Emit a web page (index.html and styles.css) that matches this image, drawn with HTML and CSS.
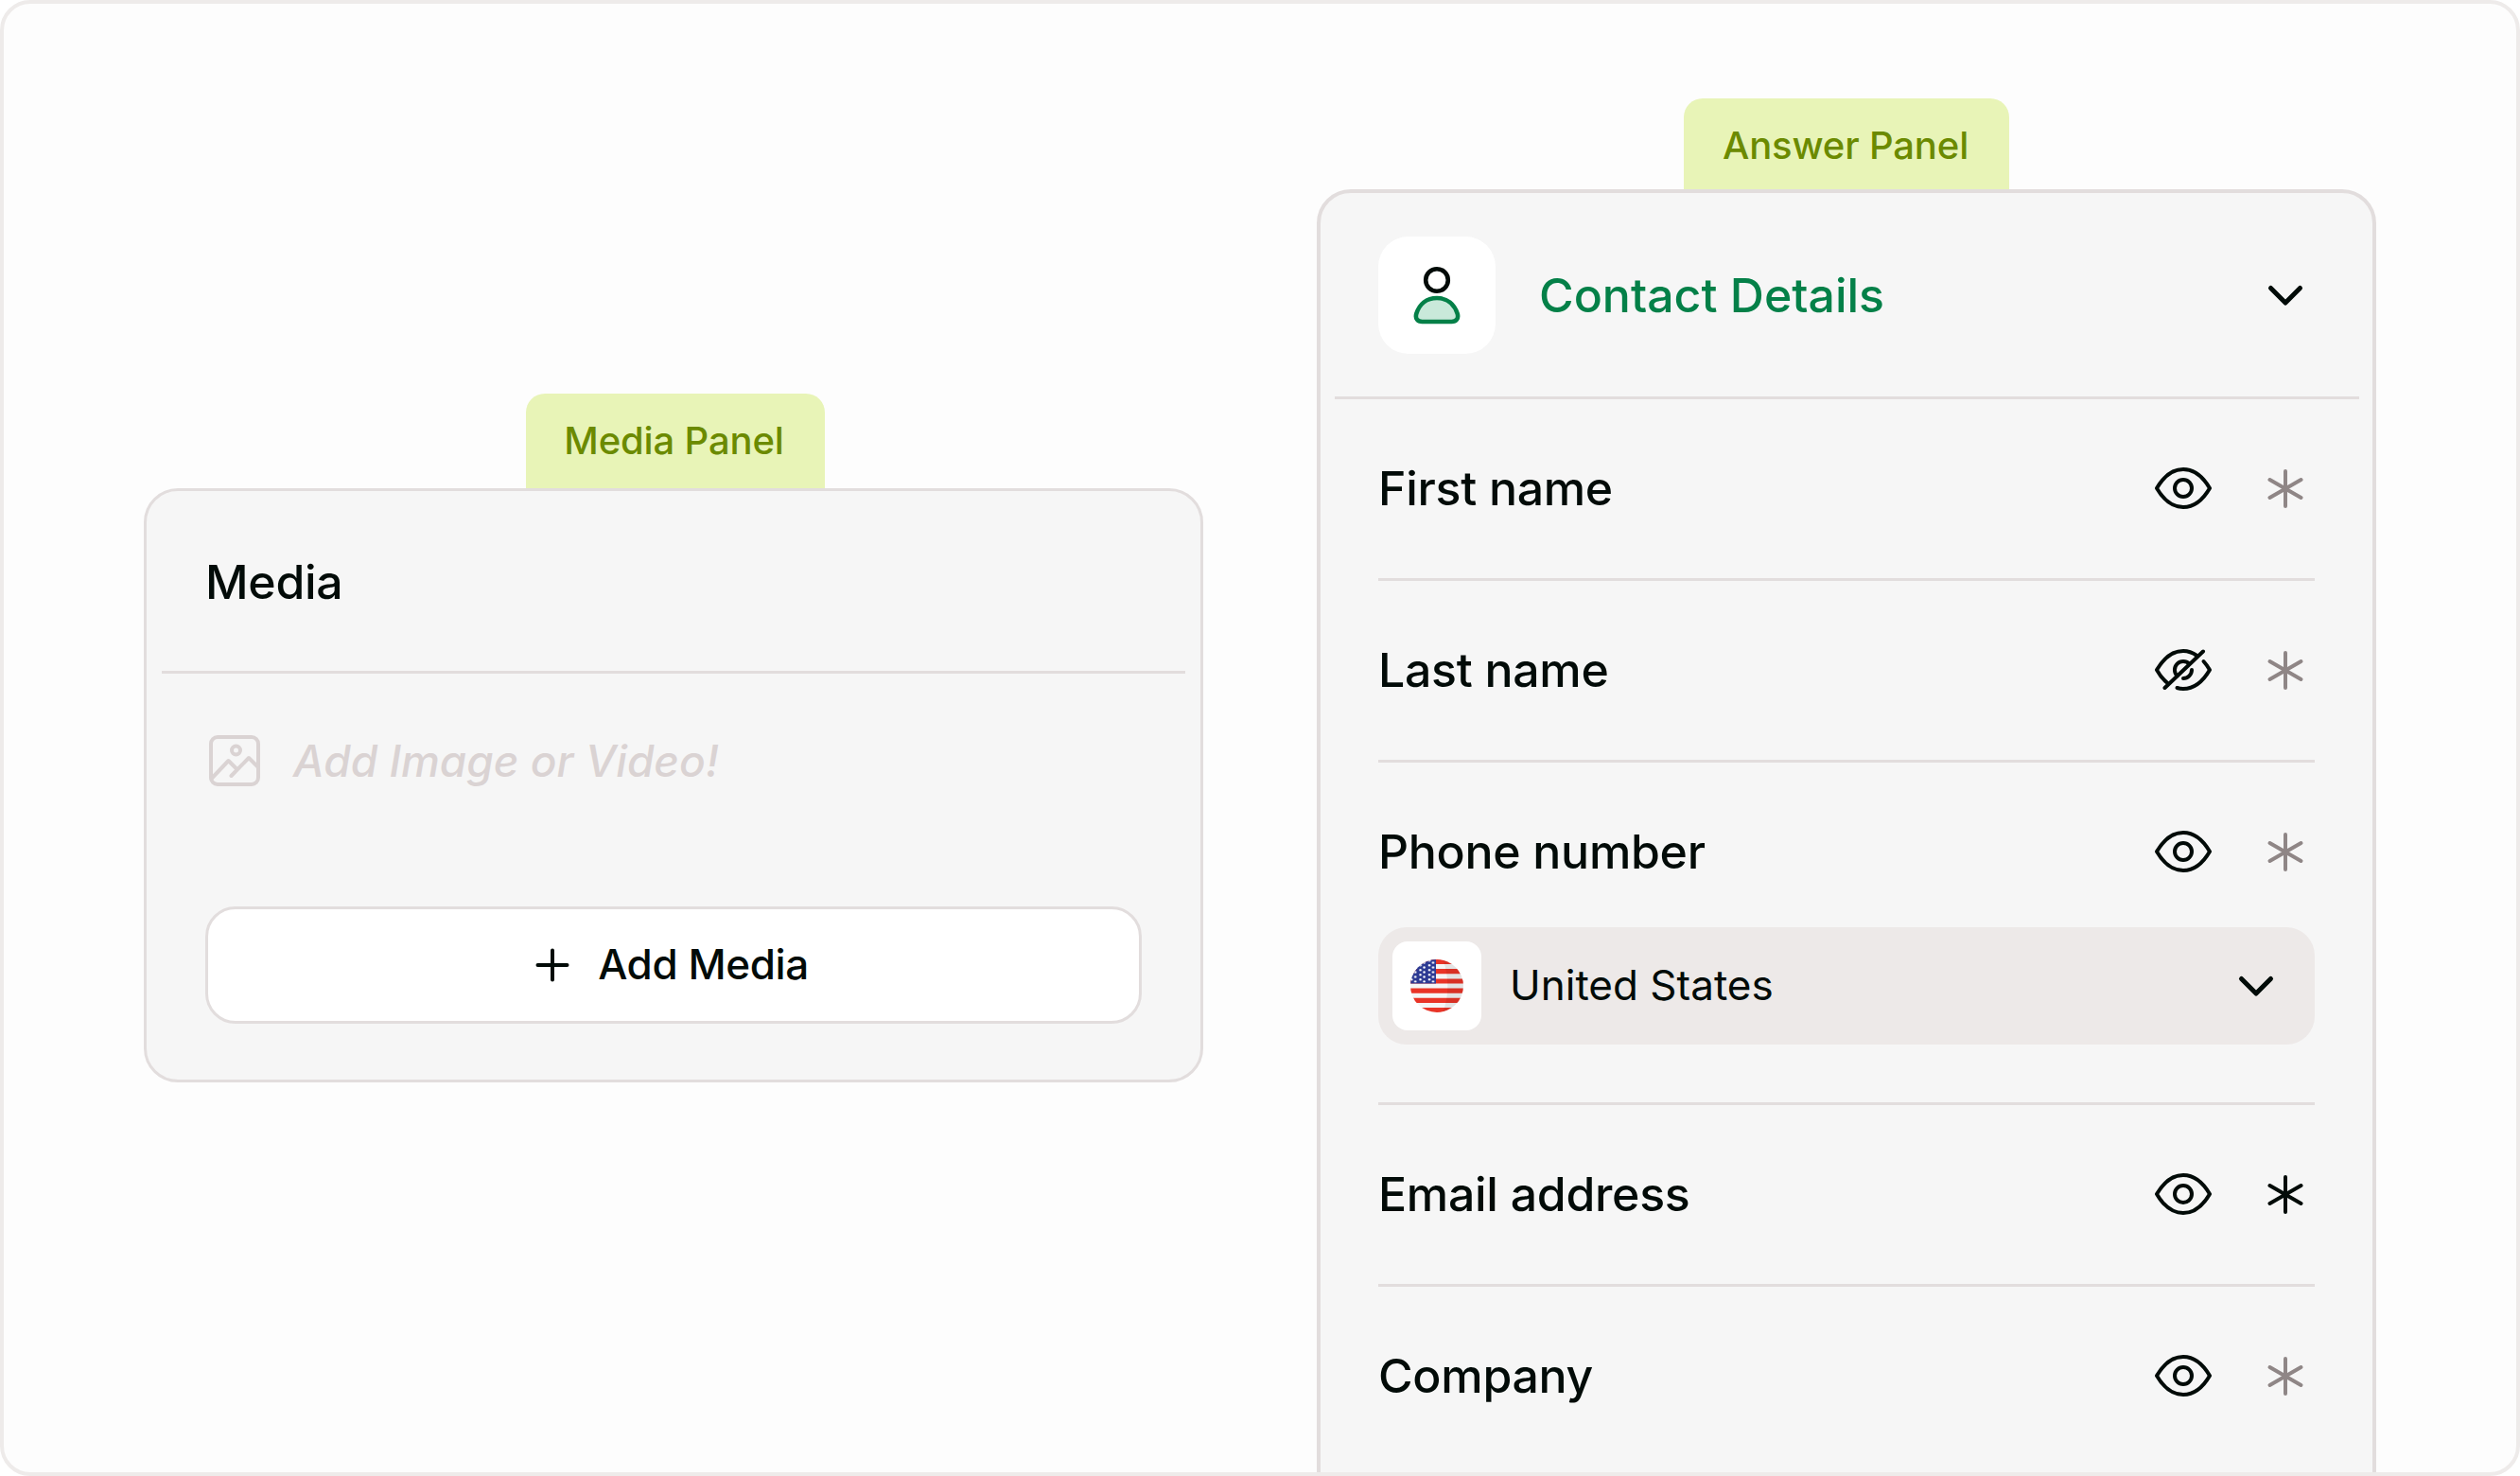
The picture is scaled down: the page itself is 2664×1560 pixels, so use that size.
FILE: index.html
```html
<!DOCTYPE html>
<html lang="en">
<head>
	<meta charset="UTF-8" />
	<meta name="viewport" content="width=device-width, initial-scale=1.0" />
	<title>Panels</title>
	<link rel="stylesheet" href="styles.css">
</head>
<body>
	<!-- icons used more than once -->
	<svg class="sprite">
		<symbol id="eye" viewBox="0 0 64 64">
			<path d="M4 32C11 20 20.500 12 32 12S53 20 60 32C53 44 43.500 52 32 52S11 44 4 32Z" />
			<circle cx="32" cy="32" r="9" />
		</symbol>
		<symbol id="eye-off" viewBox="0 0 64 64">
			<path d="M46.500 17C42 13.800 37.300 12 32 12C20.500 12 11 20 4 32C7.200 37.800 11 42.600 15.500 46" />
			<path d="M53.500 23C56 25.700 58 28.700 60 32C53 44 43.500 52 32 52C29.700 52 27.500 51.700 25.500 51" />
			<path d="M25.600 38.400A9 9 0 1 1 38.400 25.600M41 32A9 9 0 0 1 32 41" />
			<path d="M53 12.500L12.500 51" />
		</symbol>
		<symbol id="star" viewBox="0 0 64 64">
			<path d="M32 14V51M15.500 23L48.500 42M48.500 23L15.500 42" />
		</symbol>
		<symbol id="down" viewBox="0 0 64 64">
			<path d="M16.500 24.500L32 40L47.500 24.500" />
		</symbol>
	</svg>

	<div class="board">
		<div class="col col-media">
			<div class="tag tag-media">Media Panel</div>
			<div class="panel panel-media">
				<div class="media-title">Media</div>
				<div class="media-con">
					<div class="placeholder">
						<svg class="icon-image" viewBox="0 0 54 54">
							<rect x="2" y="2" width="50" height="50" rx="7" />
							<circle cx="28.500" cy="16" r="4.500" />
							<path d="M2.500 46L20.500 27L29.500 36M23.500 43L42 24L52 34" />
						</svg>
						<span>Add Image or Video!</span>
					</div>
					<div class="btn">
						<svg class="icon-plus" viewBox="0 0 36 36"><path d="M18 2.500V33.500M2.500 18H33.500" /></svg>
						<span>Add Media</span>
					</div>
				</div>
			</div>
		</div>

		<div class="col col-answer">
			<div class="tag tag-answer">Answer Panel</div>
			<div class="panel panel-answer">
				<div class="answer-title">
					<div class="avatar">
						<svg viewBox="0 0 124 124">
							<circle class="head" cx="62" cy="46" r="11.800" />
							<path class="body" d="M62 65C73 65 80.500 71.500 83.700 81.500C85.200 86.500 82.500 90 77.500 90H46.500C41.500 90 38.800 86.500 40.300 81.500C43.500 71.500 51 65 62 65Z" />
						</svg>
					</div>
					<span>Contact Details</span>
					<svg class="icon bold"><use href="#down" /></svg>
				</div>
				<ul class="fields">
					<li>
						<div class="row">
							<span>First name</span>
							<svg class="icon"><use href="#eye" /></svg>
							<svg class="icon off"><use href="#star" /></svg>
						</div>
					</li>
					<li>
						<div class="row">
							<span>Last name</span>
							<svg class="icon"><use href="#eye-off" /></svg>
							<svg class="icon off"><use href="#star" /></svg>
						</div>
					</li>
					<li class="phone">
						<div class="row">
							<span>Phone number</span>
							<svg class="icon"><use href="#eye" /></svg>
							<svg class="icon off"><use href="#star" /></svg>
						</div>
						<div class="select">
							<div class="flag">
								<svg viewBox="0 0 56 56">
									<defs>
										<clipPath id="round"><circle cx="28" cy="28" r="28" /></clipPath>
										<pattern id="stars" width="9.400" height="5" patternUnits="userSpaceOnUse">
											<circle cx="5.200" cy="3.500" r="1.200" fill="#fff" />
											<circle cx="1.200" cy="1.200" r="1.200" fill="#fff" />
										</pattern>
									</defs>
									<g clip-path="url(#round)">
										<path fill="#f5f5f5" d="M0 0H56V56H0Z" />
										<path fill="#e93427" d="M0 0H56V5H0ZM0 10H56V15.300H0ZM0 20.400H56V25.500H0ZM0 30.600H56V35.700H0ZM0 40.800H56V45.900H0ZM0 51H56V56H0Z" />
										<path fill="#2d3a93" d="M0 0H27V25.500H0Z" />
										<path fill="url(#stars)" d="M0 1H26V24.500H0Z" />
										<path fill="#000" fill-opacity=".07" d="M34 0C41 15 41 41 34 56H56V0Z" />
									</g>
								</svg>
							</div>
							<span>United States</span>
							<svg class="icon bold"><use href="#down" /></svg>
						</div>
					</li>
					<li>
						<div class="row">
							<span>Email address</span>
							<svg class="icon"><use href="#eye" /></svg>
							<svg class="icon"><use href="#star" /></svg>
						</div>
					</li>
					<li>
						<div class="row">
							<span>Company</span>
							<svg class="icon"><use href="#eye" /></svg>
							<svg class="icon off"><use href="#star" /></svg>
						</div>
					</li>
				</ul>
			</div>
		</div>
	</div>
</body>
</html>
```
FILE: styles.css
```css
*{padding: 0;margin: 0;box-sizing: border-box;}
body{
	background: #fff;
	color: #020b08;
	font-family: Inter, "Liberation Sans", sans-serif;
	font-size: 50px;
	font-weight: 500;
	line-height: 60px;
	white-space: nowrap;
}
svg{
	display: block;
	flex: none;
	fill: none;
	stroke: currentColor;
	stroke-width: 4;
	stroke-linecap: round;
	stroke-linejoin: round;
}
.sprite{display: none;}
.icon{width: 64px;height: 64px;}
.icon.bold{stroke-width: 5;}
.icon.off{color: #8f8686;}

.board{
	display: flex;
	align-items: flex-start;
	gap: 120px;
	height: 1560px;
	padding: 100px 148px 0;
	overflow: hidden;
	background: #fdfdfd;
	border: 4px solid #eeebea;
	border-radius: 32px;
}
.col{
	display: flex;
	flex-direction: column;
	align-items: center;
	width: 1120px;
}
.col-media{padding-top: 312px;}
.tag{
	background: #e8f4b7;
	color: #6b8a00;
	font-size: 40px;
	letter-spacing: -0.15px;
	text-align: center;
	border-radius: 20px 20px 0 0;
}
.tag-media{width: 316px;height: 100px;line-height: 100px;margin-right: -4px;padding-right: 3px;}
.tag-answer{width: 344px;height: 96px;line-height: 99px;padding-right: 2px;}
.panel{
	width: 100%;
	background: #f6f6f6;
	border: 3px solid #e2dddd;
	border-radius: 36px;
}

/* media */
.panel-media{height: 628px;}
.media-title{
	height: 193px;
	margin: 0 16px;
	padding: 66px 46px 0;
	border-bottom: 3px solid #e2dddd;
	letter-spacing: -0.3px;
}
.media-con{padding: 62px 62px 0;}
.placeholder{
	display: flex;
	align-items: center;
	gap: 35px;
	padding-left: 4px;
	color: #dad3d3;
	font-size: 46px;
	font-style: italic;
}
.icon-image{width: 54px;height: 54px;}
.btn{
	display: flex;
	justify-content: center;
	align-items: center;
	gap: 30px;
	height: 124px;
	margin-top: 124px;
	padding-right: 3px;
	background: #fff;
	border: 3px solid #e2dddd;
	border-radius: 32px;
	font-size: 44px;
	letter-spacing: -0.4px;
}
.btn span{padding-bottom: 2px;}
.icon-plus{width: 36px;height: 36px;}

/* answer */
.panel-answer{
	height: 1400px;
	border-width: 4px;
}
.answer-title{
	display: flex;
	align-items: center;
	height: 218px;
	margin: 0 14px 0 15px;
	padding: 0 46px;
	border-bottom: 3px solid #e2dddd;
	color: #048048;
}
.answer-title span{flex: 1;margin-left: 46px;}
.answer-title .icon{color: #020b08;}
.avatar{
	width: 124px;
	height: 124px;
	background: #fff;
	border-radius: 32px;
}
.avatar svg{stroke-width: 4.600;}
.head{stroke: #020b08;}
.body{stroke: #048048;fill: #c9e9da;}
.fields{list-style: none;padding: 0 61px;}
.fields li{
	height: 192px;
	border-bottom: 3px solid #e2dddd;
}
.fields li:last-child{border: none;}
.fields li.phone{height: 362px;}
.row{
	display: flex;
	align-items: center;
	gap: 44px;
	height: 187px;
	margin-right: -1px;
}
.row span{flex: 1;letter-spacing: -0.3px;}
.select{
	display: flex;
	align-items: center;
	height: 124px;
	margin-top: -13px;
	padding: 0 30px 0 15px;
	background: #ede9e8;
	border-radius: 30px;
	font-size: 44px;
	font-weight: 400;
}
.select span{flex: 1;margin-left: 30px;padding-bottom: 2px;}
.flag{
	display: flex;
	justify-content: center;
	align-items: center;
	width: 94px;
	height: 94px;
	background: #fff;
	border-radius: 16px;
}
.flag svg{width: 56px;height: 56px;stroke: none;}
```
